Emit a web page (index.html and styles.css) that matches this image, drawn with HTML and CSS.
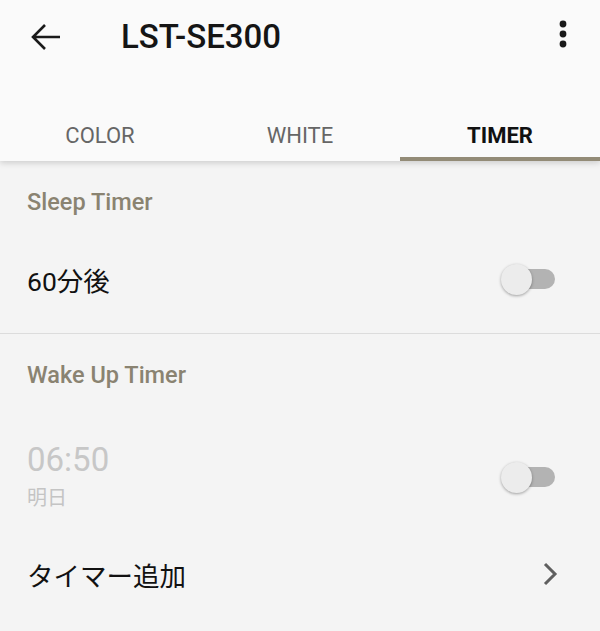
FILE: index.html
```html
<!DOCTYPE html>
<html lang="ja">
<head>
<meta charset="utf-8">
<title>LST-SE300</title>
<link rel="stylesheet" href="styles.css">
</head>
<body>
<div class="app">
  <header class="appbar">
    <div class="toolbar">
      <div class="icon-btn">
        <svg viewBox="0 0 40 40" width="40" height="40">
          <path d="M6 20H33M18 8L6 20L18 32" fill="none" stroke="#1a1a1a" stroke-width="2.6" stroke-linecap="butt" stroke-linejoin="miter"/>
        </svg>
      </div>
      <h1 class="title">LST-SE300</h1>
      <div class="spacer"></div>
      <div class="icon-btn">
        <svg viewBox="0 0 40 40" width="40" height="40">
          <circle cx="20" cy="7" r="3.4" fill="#1a1a1a"/>
          <circle cx="20" cy="17" r="3.4" fill="#1a1a1a"/>
          <circle cx="20" cy="27" r="3.4" fill="#1a1a1a"/>
        </svg>
      </div>
    </div>
    <nav class="tabs">
      <div class="tab">COLOR</div>
      <div class="tab">WHITE</div>
      <div class="tab active">TIMER</div>
    </nav>
  </header>

  <main class="content">
    <section class="section">
      <div class="section-title">Sleep Timer</div>
      <div class="row row-sleep">
        <div class="row-text primary">60分後</div>
        <div class="switch"><span class="track"></span><span class="thumb"></span></div>
      </div>
    </section>
    <div class="divider"></div>
    <section class="section">
      <div class="section-title">Wake Up Timer</div>
      <div class="row row-wake">
        <div class="row-text">
          <div class="time">06:50</div>
          <div class="day">明日</div>
        </div>
        <div class="switch"><span class="track"></span><span class="thumb"></span></div>
      </div>
      <div class="row row-add">
        <div class="row-text primary">タイマー追加</div>
        <svg class="chevron" viewBox="0 0 16 24" width="16" height="24">
          <path d="M3 2L13 12L3 22" fill="none" stroke="#5f5f5f" stroke-width="3"/>
        </svg>
      </div>
    </section>
  </main>
</div>
</body>
</html>
```

FILE: styles.css
```css
* { box-sizing: border-box; }
html, body { margin: 0; padding: 0; }
body {
  width: 600px;
  height: 631px;
  overflow: hidden;
  background: #f4f4f4;
  font-family: Roboto, "Noto Sans CJK JP", sans-serif;
  color: #111;
}
.app { display: flex; flex-direction: column; height: 631px; }

.appbar {
  background: #fafafa;
  position: relative;
  z-index: 2;
  box-shadow: 0 2px 6px rgba(0,0,0,0.16);
}
.toolbar {
  height: 74px;
  display: flex;
  align-items: center;
  padding: 0 17px 0 27px;
}
.icon-btn { width: 40px; height: 40px; display: flex; }
.title {
  margin: 0 0 0 54px;
  font-size: 33px;
  font-weight: 500;
  color: #151515;
  line-height: 40px;
}
.spacer { flex: 1; }

.tabs { display: flex; height: 87px; }
.tab {
  flex: 1;
  padding-top: 49px;
  line-height: 26px;
  font-size: 22px;
  text-align: center;
  color: #666;
  border-bottom: 4px solid transparent;
}
.tab.active {
  color: #111;
  font-weight: 700;
  border-bottom-color: #938b77;
}

.content { flex: 1; }
.section-title {
  height: 82px;
  display: flex;
  align-items: center;
  padding-left: 27px;
  font-size: 23.5px;
  font-weight: 500;
  color: #8a8371;
}
.row {
  display: flex;
  align-items: center;
  justify-content: space-between;
  padding: 0 45px 0 27px;
}
.row-sleep { height: 72px; margin-bottom: 18px; }
.row-wake { padding-top: 26px; padding-bottom: 26px; }
.row-add { height: 72px; padding-right: 42px; }
.primary { font-size: 26.5px; color: #111; }
.time { font-size: 33px; line-height: 36px; color: #c7c7c7; }
.day { font-size: 20px; line-height: 28px; margin-top: 6px; color: #c4c4c4; }
.divider { height: 1px; background: #dcdcdc; }

.switch { position: relative; width: 54px; height: 30px; }
.track {
  position: absolute;
  left: 5px; top: 5px;
  width: 49px; height: 20px;
  border-radius: 10px;
  background: #b3b3b3;
}
.thumb {
  position: absolute;
  left: 0; top: 0;
  width: 31px; height: 31px;
  margin-top: -0.5px;
  border-radius: 50%;
  background: #ececec;
  box-shadow: 0 1px 3px rgba(0,0,0,0.35);
}
.chevron { display: block; }
```
